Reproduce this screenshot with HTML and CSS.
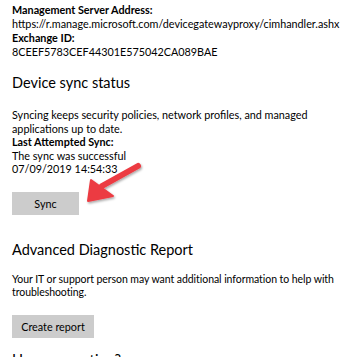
FILE: index.html
```html
<!DOCTYPE html>
<html>
<head>
<meta charset="utf-8">
<link rel="stylesheet" href="styles.css">
</head>
<body>
<div class="page">
  <div class="info">
    <div class="label">Management Server Address:</div>
    <div class="text">https://r.manage.microsoft.com/devicegatewayproxy/cimhandler.ashx</div>
    <div class="label">Exchange ID:</div>
    <div class="text">8CEEF5783CEF44301E575042CA089BAE</div>
  </div>
  <h2 class="heading h-sync">Device sync status</h2>
  <div class="status">
    <p class="text desc">Syncing keeps security policies, network profiles, and managed applications up to date.</p>
    <div class="label">Last Attempted Sync:</div>
    <div class="text">The sync was successful</div>
    <div class="text">07/09/2019 14:54:33</div>
  </div>
  <div class="btn-row">
    <button class="btn btn-sync">Sync</button>
  </div>
  <h2 class="heading h-diag">Advanced Diagnostic Report</h2>
  <p class="text desc diag-desc">Your IT or support person may want additional information to help with troubleshooting.</p>
  <div class="btn-row">
    <button class="btn btn-report">Create report</button>
  </div>
  <h2 class="heading h-question">Have a question?</h2>
</div>
<svg class="arrow" width="70" height="60" viewBox="0 0 70 60">
  <defs>
    <filter id="sh" x="-20%" y="-20%" width="140%" height="140%">
      <feDropShadow dx="1" dy="1.5" stdDeviation="1.2" flood-color="#000" flood-opacity="0.35"/>
    </filter>
  </defs>
  <g filter="url(#sh)">
    <line x1="26" y1="31" x2="62" y2="11" stroke="#ec3b43" stroke-width="6" stroke-linecap="round"/>
    <polygon points="15,25 12,46 37,41" fill="#ec3b43" stroke="#ec3b43" stroke-width="2" stroke-linejoin="round"/>
  </g>
</svg>
</body>
</html>
```
FILE: styles.css
```css
html, body {
  margin: 0;
  padding: 0;
  background: #ffffff;
}
body {
  font-family: Lato, "Open Sans", sans-serif;
  color: #000;
  position: relative;
  width: 357px;
  height: 357px;
  overflow: hidden;
}
.page {
  padding: 3px 0 0 12px;
  font-size: 10.8px;
  line-height: 14px;
}
.label {
  font-weight: 700;
}
.text {
  margin: 0;
}
.heading {
  font-weight: 400;
  font-size: 14.5px;
  line-height: 20px;
  margin: 0;
}
.h-sync {
  margin-top: 14px;
}
.status {
  margin-top: 15px;
  line-height: 13.5px;
  padding-right: 12px;
}
.desc {
  margin: 0;
}
.btn-row {
  display: flex;
}
.btn {
  font-family: inherit;
  font-size: 10.8px;
  border: none;
  background: #cccccc;
  color: #000;
  height: 23px;
  padding: 0;
}
.btn-sync {
  width: 67px;
  margin-top: 16.5px;
}
.h-diag {
  margin-top: 24.5px;
}
.diag-desc {
  margin-top: 13.7px;
  line-height: 13px;
  font-size: 10.5px;
  letter-spacing: -0.06px;
}
.btn-report {
  width: 82px;
  margin-top: 16.3px;
}
.h-question {
  margin-top: 12px;
}
.arrow {
  position: absolute;
  left: 76px;
  top: 155px;
}
```
